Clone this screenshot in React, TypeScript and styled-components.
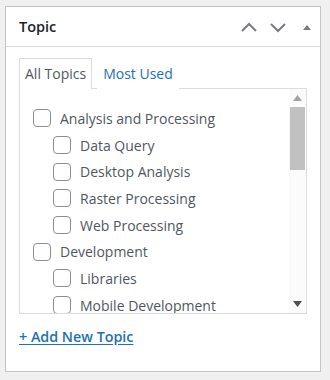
import styled, { createGlobalStyle } from 'styled-components'

const Global = createGlobalStyle`
    body {
        margin: 0;
        background: #f0f0f1;
        font-family: 'Open Sans', 'Noto Sans', sans-serif;
    }
`

interface Topic {
    id: number;
    text: string;
    child?: boolean;
}

const topics: Topic[] = [
    { id: 1, text: 'Analysis and Processing' },
    { id: 2, text: 'Data Query', child: true },
    { id: 3, text: 'Desktop Analysis', child: true },
    { id: 4, text: 'Raster Processing', child: true },
    { id: 5, text: 'Web Processing', child: true },
    { id: 6, text: 'Development' },
    { id: 7, text: 'Libraries', child: true },
    { id: 8, text: 'Mobile Development', child: true },
]

const Page = styled.div`
    padding: 6px 9px 0 5px;
`
const Box = styled.div`
    width: 316px;
    height: 366px;
    background: #fff;
    border: 1px solid #c3c4c7;
    box-sizing: border-box;
`
const Head = styled.div`
    display: flex;
    align-items: center;
    justify-content: space-between;
    height: 39px;
    padding: 0 3px 0 13px;
    border-bottom: 1px solid #dcdcde;
`
const Title = styled.div`
    font-size: 14.5px;
    font-weight: 600;
    color: #1d2327;
`
const Actions = styled.div`
    display: flex;
    align-items: center;
    gap: 9px;
`
const Body = styled.div`
    padding: 11px 13px 0 13px;
`
const Tabs = styled.div`
    display: flex;
    align-items: flex-end;
    gap: 5px;
`
const Tab = styled.div<{ active?: boolean }>`
    height: 31px;
    display: flex;
    align-items: center;
    padding: 0 5px 1px 5px;
    box-sizing: border-box;
    font-size: 14px;
    color: ${p => (p.active ? '#50575e' : '#2271b1')};
    border: 1px solid ${p => (p.active ? '#dcdcde' : 'transparent')};
    border-bottom: none;
    margin-bottom: -1px;
    background: #fff;
    position: relative;
    z-index: 1;
`
const Panel = styled.div`
    display: flex;
    height: 226px;
    border: 1px solid #dcdcde;
    box-sizing: border-box;
`
const List = styled.ul`
    flex: 1;
    list-style: none;
    margin: 0;
    padding: 16px 0 0 13px;
    overflow: hidden;
`
const Item = styled.li<{ child?: boolean }>`
    display: flex;
    align-items: center;
    gap: 9px;
    height: 26.7px;
    padding-left: ${p => (p.child ? '20px' : '0')};
    font-size: 14px;
    color: #50575e;
    white-space: nowrap;
`
const Check = styled.span`
    width: 18px;
    height: 18px;
    flex: none;
    box-sizing: border-box;
    border: 1px solid #8c8f94;
    border-radius: 4px;
    background: #fff;
`
const Scroll = styled.div`
    width: 17px;
    display: flex;
    flex-direction: column;
    align-items: center;
    background: #fbfbfb;
`
const Arrow = styled.div`
    height: 18px;
    display: flex;
    align-items: center;
    justify-content: center;
`
const Thumb = styled.div`
    width: 15px;
    height: 63px;
    background: #c1c1c1;
`
const Track = styled.div`
    flex: 1;
`
const AddLink = styled.a`
    display: inline-block;
    margin-top: 13px;
    font-size: 14.3px;
    font-weight: 600;
    color: #2271b1;
    text-decoration: underline;
    text-underline-offset: 2px;
`

const Chevron = ({ up }: { up?: boolean }) => (
    <svg width="20" height="20" viewBox="0 0 20 20">
        <path d={up ? 'M3 14 L10 7 L17 14' : 'M3 7 L10 14 L17 7'} fill="none" stroke="#787c82" strokeWidth="2" />
    </svg>
)

const App = () => {
    return (
        <Page>
            <Global />
            <Box>
                <Head>
                    <Title>Topic</Title>
                    <Actions>
                        <Chevron up />
                        <Chevron />
                        <svg width="20" height="20" viewBox="0 0 20 20">
                            <path d="M6 13 L14 13 L10 8 Z" fill="#787c82" />
                        </svg>
                    </Actions>
                </Head>
                <Body>
                    <Tabs>
                        <Tab active>All Topics</Tab>
                        <Tab>Most Used</Tab>
                    </Tabs>
                    <Panel>
                        <List>
                            {topics.map(t =>
                                <Item key={t.id} child={t.child}>
                                    <Check />
                                    {t.text}
                                </Item>
                            )}
                        </List>
                        <Scroll>
                            <Arrow>
                                <svg width="9" height="6" viewBox="0 0 9 6"><path d="M0 6 L9 6 L4.5 0 Z" fill="#a3a3a3" /></svg>
                            </Arrow>
                            <Thumb />
                            <Track />
                            <Arrow>
                                <svg width="9" height="6" viewBox="0 0 9 6"><path d="M0 0 L9 0 L4.5 6 Z" fill="#505050" /></svg>
                            </Arrow>
                        </Scroll>
                    </Panel>
                    <AddLink href="#">+ Add New Topic</AddLink>
                </Body>
            </Box>
        </Page>
    )
}

export default App
